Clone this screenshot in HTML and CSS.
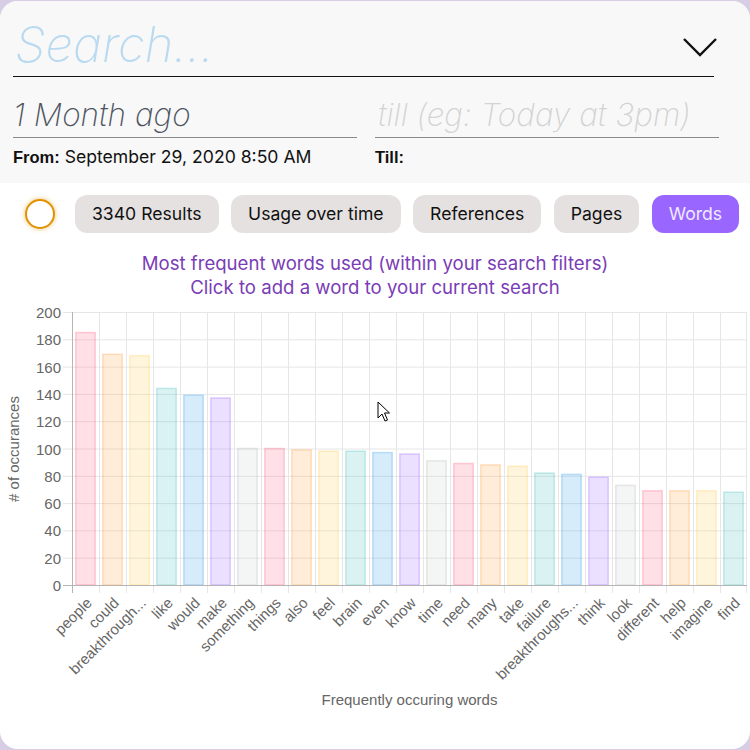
FILE: index.html
```html
<!DOCTYPE html>
<html>
<head>
<meta charset="utf-8">
<link rel="stylesheet" href="styles.css">
</head>
<body>
<div class="card">
  <section class="filters">
    <div class="search-row">
      <span class="search-ph">Search...</span>
      <svg class="chevron" width="36" height="20" viewBox="0 0 36 20"><path d="M2 2 L18 18 L34 2" fill="none" stroke="#111" stroke-width="2.4"/></svg>
    </div>
    <div class="dates">
      <div class="date-col">
        <div class="date-input filled">1 Month ago</div>
        <div class="date-info"><b>From:</b> September 29, 2020 8:50 AM</div>
      </div>
      <div class="date-col">
        <div class="date-input empty">till (eg: Today at 3pm)</div>
        <div class="date-info"><b>Till:</b></div>
      </div>
    </div>
  </section>
  <nav class="tabs">
    <span class="spinner"></span>
    <span class="tab">3340 Results</span>
    <span class="tab">Usage over time</span>
    <span class="tab">References</span>
    <span class="tab">Pages</span>
    <span class="tab active">Words</span>
  </nav>
  <p class="chart-title">Most frequent words used (within your search filters)<br>Click to add a word to your current search</p>
  <svg class="chart" width="750" height="420" viewBox="0 299 750 420">
    <g class="grid">
      <line x1="63" y1="312.5" x2="747" y2="312.5"/>
      <line x1="63" y1="339.8" x2="747" y2="339.8"/>
      <line x1="63" y1="367.1" x2="747" y2="367.1"/>
      <line x1="63" y1="394.4" x2="747" y2="394.4"/>
      <line x1="63" y1="421.7" x2="747" y2="421.7"/>
      <line x1="63" y1="449" x2="747" y2="449"/>
      <line x1="63" y1="476.3" x2="747" y2="476.3"/>
      <line x1="63" y1="503.6" x2="747" y2="503.6"/>
      <line x1="63" y1="530.9" x2="747" y2="530.9"/>
      <line x1="63" y1="558.2" x2="747" y2="558.2"/>
      <line x1="99.5" y1="312" x2="99.5" y2="593"/>
      <line x1="126.5" y1="312" x2="126.5" y2="593"/>
      <line x1="153.5" y1="312" x2="153.5" y2="593"/>
      <line x1="180.5" y1="312" x2="180.5" y2="593"/>
      <line x1="207.5" y1="312" x2="207.5" y2="593"/>
      <line x1="234.5" y1="312" x2="234.5" y2="593"/>
      <line x1="261.5" y1="312" x2="261.5" y2="593"/>
      <line x1="288.5" y1="312" x2="288.5" y2="593"/>
      <line x1="315.5" y1="312" x2="315.5" y2="593"/>
      <line x1="342.5" y1="312" x2="342.5" y2="593"/>
      <line x1="369.5" y1="312" x2="369.5" y2="593"/>
      <line x1="396.5" y1="312" x2="396.5" y2="593"/>
      <line x1="423.5" y1="312" x2="423.5" y2="593"/>
      <line x1="450.5" y1="312" x2="450.5" y2="593"/>
      <line x1="477.5" y1="312" x2="477.5" y2="593"/>
      <line x1="504.5" y1="312" x2="504.5" y2="593"/>
      <line x1="531.5" y1="312" x2="531.5" y2="593"/>
      <line x1="558.5" y1="312" x2="558.5" y2="593"/>
      <line x1="585.5" y1="312" x2="585.5" y2="593"/>
      <line x1="612.5" y1="312" x2="612.5" y2="593"/>
      <line x1="639.5" y1="312" x2="639.5" y2="593"/>
      <line x1="666.5" y1="312" x2="666.5" y2="593"/>
      <line x1="693.5" y1="312" x2="693.5" y2="593"/>
      <line x1="720.5" y1="312" x2="720.5" y2="593"/>
      <line x1="746.5" y1="312" x2="746.5" y2="593"/>
    </g>
    <g class="bars">
      <rect class="c-pink" x="75.8" y="332.5" width="19.4" height="252.5"/>
      <rect class="c-orange" x="102.8" y="354.3" width="19.4" height="230.7"/>
      <rect class="c-yellow" x="129.8" y="355.7" width="19.4" height="229.3"/>
      <rect class="c-teal" x="156.8" y="388.4" width="19.4" height="196.6"/>
      <rect class="c-blue" x="183.8" y="395.3" width="19.4" height="189.7"/>
      <rect class="c-purple" x="210.8" y="398" width="19.4" height="187"/>
      <rect class="c-grey" x="237.8" y="448.5" width="19.4" height="136.5"/>
      <rect class="c-pink" x="264.8" y="448.5" width="19.4" height="136.5"/>
      <rect class="c-orange" x="291.8" y="449.9" width="19.4" height="135.1"/>
      <rect class="c-yellow" x="318.8" y="451.2" width="19.4" height="133.8"/>
      <rect class="c-teal" x="345.8" y="451.2" width="19.4" height="133.8"/>
      <rect class="c-blue" x="372.8" y="452.6" width="19.4" height="132.4"/>
      <rect class="c-purple" x="399.8" y="454" width="19.4" height="131"/>
      <rect class="c-grey" x="426.8" y="460.8" width="19.4" height="124.2"/>
      <rect class="c-pink" x="453.8" y="463.5" width="19.4" height="121.5"/>
      <rect class="c-orange" x="480.8" y="464.9" width="19.4" height="120.1"/>
      <rect class="c-yellow" x="507.8" y="466.2" width="19.4" height="118.8"/>
      <rect class="c-teal" x="534.8" y="473.1" width="19.4" height="111.9"/>
      <rect class="c-blue" x="561.8" y="474.4" width="19.4" height="110.6"/>
      <rect class="c-purple" x="588.8" y="477.2" width="19.4" height="107.8"/>
      <rect class="c-grey" x="615.8" y="485.4" width="19.4" height="99.6"/>
      <rect class="c-pink" x="642.8" y="490.8" width="19.4" height="94.2"/>
      <rect class="c-orange" x="669.8" y="490.8" width="19.4" height="94.2"/>
      <rect class="c-yellow" x="696.8" y="490.8" width="19.4" height="94.2"/>
      <rect class="c-teal" x="723.8" y="492.2" width="19.4" height="92.8"/>
    </g>
    <g class="axis">
      <line x1="72.5" y1="312" x2="72.5" y2="593"/>
      <line x1="63" y1="585.5" x2="747" y2="585.5"/>
    </g>
    <g class="yticks">
      <text x="61" y="312.5">200</text>
      <text x="61" y="339.8">180</text>
      <text x="61" y="367.1">160</text>
      <text x="61" y="394.4">140</text>
      <text x="61" y="421.7">120</text>
      <text x="61" y="449">100</text>
      <text x="61" y="476.3">80</text>
      <text x="61" y="503.6">60</text>
      <text x="61" y="530.9">40</text>
      <text x="61" y="558.2">20</text>
      <text x="61" y="585.5">0</text>
    </g>
    <g class="xticks">
      <text transform="translate(89,600) rotate(-45)">people</text>
      <text transform="translate(116,600) rotate(-45)">could</text>
      <text transform="translate(143,600) rotate(-45)">breakthrough...</text>
      <text transform="translate(170,600) rotate(-45)">like</text>
      <text transform="translate(197,600) rotate(-45)">would</text>
      <text transform="translate(224,600) rotate(-45)">make</text>
      <text transform="translate(251,600) rotate(-45)">something</text>
      <text transform="translate(278,600) rotate(-45)">things</text>
      <text transform="translate(305,600) rotate(-45)">also</text>
      <text transform="translate(332,600) rotate(-45)">feel</text>
      <text transform="translate(359,600) rotate(-45)">brain</text>
      <text transform="translate(386,600) rotate(-45)">even</text>
      <text transform="translate(413,600) rotate(-45)">know</text>
      <text transform="translate(440,600) rotate(-45)">time</text>
      <text transform="translate(467,600) rotate(-45)">need</text>
      <text transform="translate(494,600) rotate(-45)">many</text>
      <text transform="translate(521,600) rotate(-45)">take</text>
      <text transform="translate(548,600) rotate(-45)">failure</text>
      <text transform="translate(575,600) rotate(-45)">breakthroughs...</text>
      <text transform="translate(602,600) rotate(-45)">think</text>
      <text transform="translate(629,600) rotate(-45)">look</text>
      <text transform="translate(656,600) rotate(-45)">different</text>
      <text transform="translate(683,600) rotate(-45)">help</text>
      <text transform="translate(710,600) rotate(-45)">imagine</text>
      <text transform="translate(737,600) rotate(-45)">find</text>
    </g>
    <text class="ytitle" transform="translate(13,449) rotate(-90)"># of occurances</text>
    <text class="xtitle" x="409.5" y="705">Frequently occuring words</text>
  </svg>
  <svg class="cursor" width="14" height="22" viewBox="0 0 14 22"><path d="M1 1 L1 17 L5 13 L8 20 L10.5 19 L7.5 12 L12.5 12 Z" fill="#fff" stroke="#000" stroke-width="1" stroke-linejoin="round"/></svg>
</div>
</body>
</html>
```
FILE: styles.css
```css
* { box-sizing: border-box; }
html, body { margin: 0; padding: 0; }
body {
  background: #d7cee6;
  width: 750px;
  height: 750px;
  overflow: hidden;
  font-family: Inter, "Noto Sans", sans-serif;
}
.card {
  position: relative;
  margin-top: 1px;
  width: 750px;
  height: 748px;
  background: #fff;
  border-radius: 18px;
  overflow: hidden;
}
.filters {
  background: #f8f8f8;
  padding: 0 31px 16px 13px;
}
.search-row {
  display: flex;
  align-items: flex-start;
  margin-right: 5px;
  height: 76px;
  border-bottom: 1px solid #111;
  padding-top: 14px;
}
.search-ph {
  font-size: 49px;
  line-height: 60px;
  font-style: italic;
  font-weight: 200;
  color: #b9daf0;
  padding-left: 2px;
}
.chevron {
  margin-left: auto;
  margin-right: -4px;
  margin-top: 22px;
}
.dates {
  display: grid;
  grid-template-columns: 344px 344px;
  column-gap: 18px;
}
.date-input {
  margin-top: 18px;
  font-size: 31.5px;
  line-height: 40px;
  padding-bottom: 2px;
  font-style: italic;
  font-weight: 200;
  border-bottom: 1px solid #8a8a8a;
  white-space: nowrap;
}
.date-input.filled { color: #4d5360; }
.date-input.empty { color: #d3d3d3; padding-left: 3px; }
.date-info {
  margin-top: 9px;
  font-size: 17.6px;
  line-height: 20px;
  color: #111;
}
.date-info b { font-family: "Liberation Sans", Arial, sans-serif; font-weight: 700; font-size: 16.5px; }
.tabs {
  display: flex;
  align-items: center;
  gap: 12.5px;
  margin-top: 12px;
  padding-left: 25px;
  height: 38px;
}
.spinner {
  width: 30px;
  height: 30px;
  border-radius: 50%;
  border: 2px solid #e29200;
  background: #fff;
  box-shadow: 0 0 5px rgba(226, 146, 0, 0.55);
  margin-right: 7.5px;
}
.tab {
  height: 38px;
  line-height: 38px;
  padding: 0 17px;
  border-radius: 12px;
  background: #e5e1e1;
  font-size: 17.6px;
  color: #111;
  white-space: nowrap;
}
.tab.active {
  background: #9966ff;
  color: #f0eaff;
}
.chart-title {
  margin: 18px 0 0;
  text-align: center;
  font-size: 18.6px;
  line-height: 24px;
  color: #7a3db5;
}
.chart { display: block; }
.grid line { stroke: #e6e6e6; stroke-width: 1; }
.axis line { stroke: #b5b5b5; stroke-width: 1; }
.bars rect { stroke-width: 1.5; }
.c-pink { fill: rgba(255, 99, 132, 0.2); stroke: rgba(255, 99, 132, 0.3); }
.c-orange { fill: rgba(255, 159, 64, 0.2); stroke: rgba(255, 159, 64, 0.3); }
.c-yellow { fill: rgba(255, 205, 86, 0.2); stroke: rgba(255, 205, 86, 0.3); }
.c-teal { fill: rgba(75, 192, 192, 0.2); stroke: rgba(75, 192, 192, 0.3); }
.c-blue { fill: rgba(54, 162, 235, 0.2); stroke: rgba(54, 162, 235, 0.3); }
.c-purple { fill: rgba(153, 102, 255, 0.2); stroke: rgba(153, 102, 255, 0.3); }
.c-grey { fill: rgba(201, 203, 207, 0.2); stroke: rgba(201, 203, 207, 0.45); }
.yticks text {
  font-family: "Liberation Sans", Arial, sans-serif;
  font-size: 15px;
  fill: #666;
  text-anchor: end;
  dominant-baseline: central;
}
.xticks text {
  font-family: "Liberation Sans", Arial, sans-serif;
  font-size: 15px;
  fill: #666;
  text-anchor: end;
  dominant-baseline: central;
}
.ytitle, .xtitle {
  font-family: "Liberation Sans", Arial, sans-serif;
  font-size: 15px;
  fill: #666;
  text-anchor: middle;
}
.ytitle { dominant-baseline: central; }
.cursor {
  position: absolute;
  left: 377px;
  top: 400px;
}
```
